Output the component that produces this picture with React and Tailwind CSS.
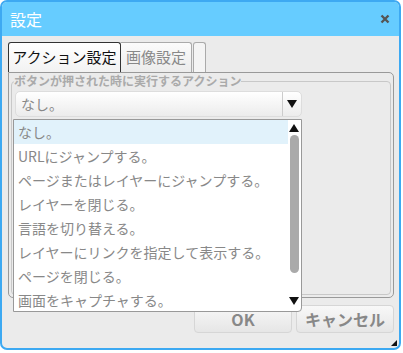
const items = [
  'なし。',
  'URLにジャンプする。',
  'ページまたはレイヤーにジャンプする。',
  'レイヤーを閉じる。',
  '言語を切り替える。',
  'レイヤーにリンクを指定して表示する。',
  'ページを閉じる。',
  '画面をキャプチャする。',
];

const font = { fontFamily: '"Noto Sans CJK JP", "Noto Sans", sans-serif' };

export default function App() {
  return (
    <div className="w-[403px] h-[353px] bg-white" style={font}>
      <div className="w-[401px] h-[350px] border-2 border-[#3da9f2] rounded-[7px] overflow-hidden flex flex-col bg-[#ebebeb]">
        {/* タイトルバー */}
        <div className="h-[34px] shrink-0 bg-[#66ccff] flex items-center justify-between pl-[8px] pr-[9px]">
          <span className="text-white text-[16px] leading-none">設定</span>
          <svg width="10" height="10" viewBox="0 0 10 10">
            <path d="M1.5 1.5 L8.5 8.5 M8.5 1.5 L1.5 8.5" stroke="#555" strokeWidth="2.4" />
          </svg>
        </div>

        <div className="relative flex-1 flex flex-col">
          {/* タブ */}
          <div className="flex items-end h-[36px] pl-[6px] pt-[6px]">
            <div className="h-[30px] w-[113px] border border-[#333] border-b-0 rounded-t-[3px] bg-gradient-to-b from-white to-[#f2f2f2] flex items-center justify-center text-[15px] text-[#111]">
              アクション設定
            </div>
            <div className="h-[30px] w-[71px] border border-[#aaa] border-b-0 border-l-0 rounded-tr-[3px] bg-gradient-to-b from-[#fbfbfb] to-[#ececec] flex items-center justify-center text-[15px] text-[#888]">
              画像設定
            </div>
            <div className="h-[30px] w-[13px] ml-[1px] border border-[#aaa] border-b-0 rounded-t-[3px] bg-[#f4f4f4]" />
          </div>

          {/* パネル */}
          <div className="ml-[6px] w-[386px] h-[226px] border border-[#999] rounded-[5px] rounded-tl-none p-[2px] pt-0">
            <fieldset className="h-[222px] border border-[#c8c8c8] rounded-[4px] px-[3px]">
              <legend className="text-[12px] font-bold text-[#aaa] leading-[16px] px-0 -ml-[1px]">
                ボタンが押された時に実行するアクション
              </legend>
              <div className="mt-[2px] w-[287px] h-[26px] border border-[#ddd] rounded-[5px] bg-gradient-to-b from-white to-[#ececec] flex items-center">
                <span className="flex-1 pl-[5px] text-[14px] text-[#888]">なし。</span>
                <div className="w-[19px] h-full border-l border-[#ccc] flex items-center justify-center">
                  <svg width="10" height="8" viewBox="0 0 10 8">
                    <path d="M0 0 H10 L5 8 Z" fill="#111" />
                  </svg>
                </div>
              </div>
            </fieldset>
          </div>

          {/* ボタン */}
          <div className="flex justify-end gap-[4px] mt-[7px] pr-[5px]">
            <button className="w-[98px] h-[28px] border border-[#d6d6d6] rounded-[4px] bg-gradient-to-b from-[#f8f8f8] to-[#e6e6e6] text-[16px] font-bold text-[#888]">
              OK
            </button>
            <button className="w-[98px] h-[28px] border border-[#d6d6d6] rounded-[4px] bg-gradient-to-b from-[#f8f8f8] to-[#e6e6e6] text-[16px] font-bold text-[#888]">
              キャンセル
            </button>
          </div>

          {/* リサイズ */}
          <svg className="absolute right-[2px] bottom-[2px]" width="6" height="6" viewBox="0 0 6 6">
            <path d="M6 0 V6 H0 Z" fill="#111" />
          </svg>

          {/* ドロップダウン */}
          <div className="absolute left-[11px] top-[83px] w-[289px] h-[193px] bg-white border border-[#999] rounded-br-[4px] flex">
            <div className="flex-1 flex flex-col">
              {items.map((t, i) => (
                <div
                  key={i}
                  className={`h-[24px] shrink-0 flex items-center pl-[4px] text-[14px] text-[#888] whitespace-nowrap ${i === 0 ? 'bg-[#e1f2fb]' : ''}`}
                >
                  {t}
                </div>
              ))}
            </div>
            <div className="w-[12px] flex flex-col items-center pt-[4px] pb-[6px] mr-[1px]">
              <svg width="10" height="8" viewBox="0 0 10 8">
                <path d="M0 8 H10 L5 0 Z" fill="#111" />
              </svg>
              <div className="w-[9px] h-[138px] mt-[3px] bg-[#aaa] rounded-full" />
              <div className="flex-1" />
              <svg width="10" height="8" viewBox="0 0 10 8">
                <path d="M0 0 H10 L5 8 Z" fill="#111" />
              </svg>
            </div>
          </div>
        </div>
      </div>
    </div>
  );
}
